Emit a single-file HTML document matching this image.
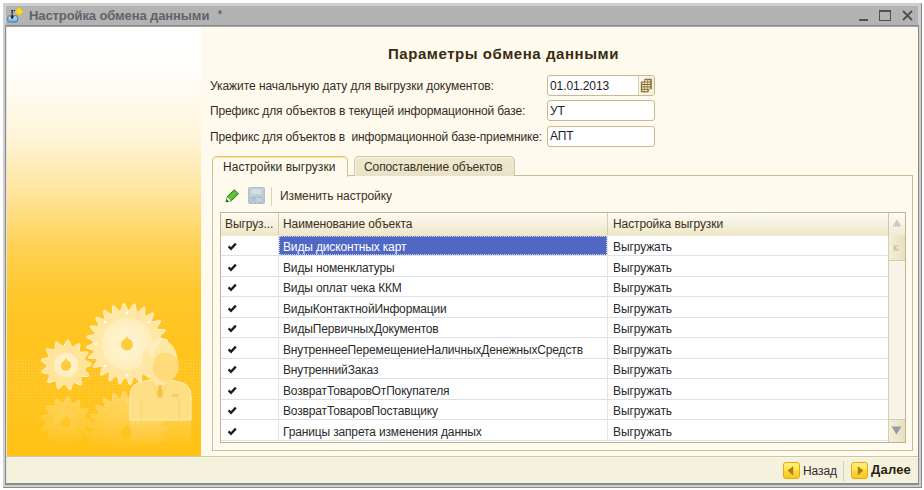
<!DOCTYPE html>
<html><head><meta charset="utf-8">
<style>
*{box-sizing:border-box}
html,body{margin:0;padding:0}
body{width:924px;height:490px;background:#fff;position:relative;overflow:hidden;font-family:"Liberation Sans",sans-serif;font-size:12px;color:#000}
.a{position:absolute}
.t{position:absolute;white-space:pre;line-height:14px;letter-spacing:-0.1px}
</style></head><body>
<!-- window frame -->
<div class="a" style="left:3px;top:3px;width:919px;height:485px;background:#cfcfcf;border-right:1px solid #8a8a8a;border-bottom:1px solid #8a8a8a"></div>
<div class="a" style="left:6px;top:6px;width:912px;height:20px;background:#b3b3b3"></div>
<div class="a" style="left:5px;top:25px;width:914px;height:460px;border:1px solid #8c8c8c;border-top:1px solid #8a8a8a;border-right-width:2px;border-bottom-width:2px;border-right-color:#8a8a8a;box-shadow:inset 1px 1px 0 #e2e2e2"></div>
<div class="a" style="left:6px;top:26px;width:912px;height:1px;background:#a6a6a6"></div>

<!-- title -->
<svg class="a" style="left:7px;top:6px" width="18" height="18" viewBox="0 0 18 18">
  <defs><linearGradient id="tb" x1="0" y1="0" x2="0" y2="1"><stop offset="0" stop-color="#c8e8fa"/><stop offset="1" stop-color="#6aaee0"/></linearGradient></defs>
  <rect x="0.8" y="9.8" width="9.8" height="6.2" rx="1.8" fill="url(#tb)" stroke="#3f76a8" stroke-width="1"/>
  <path d="M5.2 4 V11" stroke="#111" stroke-width="1.6" stroke-dasharray="1.4 0.8"/>
  <path d="M4.6 4.6 H9.2" stroke="#222" stroke-width="1.3" stroke-dasharray="1.3 0.8"/>
  <path d="M3.3 10.2 L7.1 10.2 L5.2 13.2 Z" fill="#111"/>
  <path d="M12.2 1 L16.7 5.5 L12.2 10 L7.7 5.5 Z" fill="#f8d820" stroke="#e0b020" stroke-width="0.7"/>
</svg>
<div class="t" style="left:29px;top:8px;font-weight:bold;font-size:13px;color:#62626c;line-height:16px">Настройка обмена данными</div>
<div class="t" style="left:218px;top:9px;font-weight:bold;font-size:10px;color:#62626c;line-height:12px">*</div>
<div class="a" style="left:859px;top:19px;width:9px;height:2px;background:#505050"></div>
<div class="a" style="left:879px;top:10px;width:12px;height:11px;border:2px solid #505050;border-width:2px 1.5px 1.5px 1.5px"></div>
<svg class="a" style="left:902px;top:10px" width="11" height="11" viewBox="0 0 11 11"><path d="M1 1 L10 10 M10 1 L1 10" stroke="#505050" stroke-width="1.8"/></svg>

<!-- content area -->
<div class="a" style="left:7px;top:27px;width:911px;height:430px;background:#fefaee"></div>
<!-- left image -->
<div class="a" style="left:7px;top:27px;width:194px;height:429px;background:linear-gradient(180deg,#ffffff 0px,#fffefb 45px,#fff5da 107px,#ffe59e 164px,#ffd152 222px,#ffc72c 267px,#ffc31c 330px,#ffc216 429px);overflow:hidden">
<svg class="a" style="left:0;top:0" width="194" height="429" viewBox="0 0 194 429">
<defs><pattern id="dots" width="3" height="3" patternUnits="userSpaceOnUse"><rect width="1.5" height="1.5" fill="#fff" fill-opacity="0.2"/></pattern><linearGradient id="fade" x1="0" y1="0" x2="0" y2="1"><stop offset="0" stop-color="#fff" stop-opacity="1"/><stop offset="0.5" stop-color="#fff" stop-opacity="0.7"/><stop offset="1" stop-color="#fff" stop-opacity="0"/></linearGradient><mask id="fm"><rect x="0" y="331" width="194" height="85" fill="url(#fade)"/></mask><linearGradient id="rf" x1="0" y1="0" x2="0" y2="1"><stop offset="0" stop-color="#fff" stop-opacity="0.9"/><stop offset="1" stop-color="#fff" stop-opacity="0"/></linearGradient><mask id="rm"><rect x="0" y="362" width="194" height="62" fill="url(#rf)"/></mask><radialGradient id="dg"><stop offset="0" stop-color="#fff4d4"/><stop offset="0.85" stop-color="#ffefc2"/><stop offset="1" stop-color="#ffecb8"/></radialGradient></defs>
<rect x="0" y="331" width="194" height="85" fill="url(#dots)" mask="url(#fm)"/>
<g mask="url(#rm)" opacity="0.6"><path d="M78.1,398.9 L77.9,400.0 L82.0,404.8 L81.2,406.6 L74.8,406.4 L74.1,407.3 L73.4,408.2 L74.8,414.4 L73.3,415.5 L67.7,412.5 L66.7,412.9 L65.6,413.3 L64.0,419.5 L62.1,419.8 L58.6,414.5 L57.5,414.4 L56.3,414.3 L52.0,419.0 L50.2,418.4 L49.6,412.1 L48.6,411.5 L47.7,410.9 L41.7,413.0 L40.3,411.6 L42.7,405.7 L42.1,404.8 L41.6,403.8 L35.3,402.9 L34.7,401.1 L39.6,396.9 L39.5,395.8 L39.5,394.7 L34.3,391.0 L34.7,389.1 L40.9,387.7 L41.4,386.7 L41.9,385.7 L39.0,380.0 L40.2,378.5 L46.4,380.1 L47.3,379.4 L48.2,378.8 L48.3,372.4 L50.1,371.7 L54.7,376.0 L55.8,375.8 L57.0,375.6 L60.0,370.0 L61.9,370.2 L64.1,376.2 L65.1,376.5 L66.2,376.9 L71.5,373.4 L73.1,374.4 L72.2,380.7 L73.0,381.5 L73.8,382.3 L80.1,381.6 L81.1,383.3 L77.4,388.5 L77.7,389.5 L78.0,390.6 L83.9,393.0 L84.0,394.9 L78.3,397.8Z" fill="#ffe49a" stroke="#fff0c4" stroke-width="1"/><circle cx="59" cy="395" r="12" fill="url(#dg)"/><circle cx="59" cy="395.5" r="5" fill="#ffcd3c"/><path d="M57.4 391.2 L59 388 L60.6 391.2Z" fill="#ffcd3c"/><path d="M154.0,406.7 L153.9,407.8 L160.1,411.5 L159.8,413.1 L152.7,414.4 L152.4,415.4 L152.0,416.4 L157.0,421.6 L156.3,423.2 L149.1,422.5 L148.6,423.5 L148.0,424.3 L151.5,430.6 L150.4,431.9 L143.6,429.5 L142.8,430.2 L142.0,430.9 L143.8,437.9 L142.4,438.9 L136.4,434.8 L135.5,435.3 L134.5,435.7 L134.4,442.9 L132.8,443.5 L128.2,438.0 L127.1,438.2 L126.1,438.4 L124.1,445.4 L122.4,445.5 L119.4,439.0 L118.3,439.0 L117.2,438.9 L113.5,445.1 L111.9,444.8 L110.6,437.7 L109.6,437.4 L108.6,437.0 L103.4,442.0 L101.8,441.3 L102.5,434.1 L101.5,433.6 L100.7,433.0 L94.4,436.5 L93.1,435.4 L95.5,428.6 L94.8,427.8 L94.1,427.0 L87.1,428.8 L86.1,427.4 L90.2,421.4 L89.7,420.5 L89.3,419.5 L82.1,419.4 L81.5,417.8 L87.0,413.2 L86.8,412.1 L86.6,411.1 L79.6,409.1 L79.5,407.4 L86.0,404.4 L86.0,403.3 L86.1,402.2 L79.9,398.5 L80.2,396.9 L87.3,395.6 L87.6,394.6 L88.0,393.6 L83.0,388.4 L83.7,386.8 L90.9,387.5 L91.4,386.5 L92.0,385.7 L88.5,379.4 L89.6,378.1 L96.4,380.5 L97.2,379.8 L98.0,379.1 L96.2,372.1 L97.6,371.1 L103.6,375.2 L104.5,374.7 L105.5,374.3 L105.6,367.1 L107.2,366.5 L111.8,372.0 L112.9,371.8 L113.9,371.6 L115.9,364.6 L117.6,364.5 L120.6,371.0 L121.7,371.0 L122.8,371.1 L126.5,364.9 L128.1,365.2 L129.4,372.3 L130.4,372.6 L131.4,373.0 L136.6,368.0 L138.2,368.7 L137.5,375.9 L138.5,376.4 L139.3,377.0 L145.6,373.5 L146.9,374.6 L144.5,381.4 L145.2,382.2 L145.9,383.0 L152.9,381.2 L153.9,382.6 L149.8,388.6 L150.3,389.5 L150.7,390.5 L157.9,390.6 L158.5,392.2 L153.0,396.8 L153.2,397.9 L153.4,398.9 L160.4,400.9 L160.5,402.6 L154.0,405.6Z" fill="#ffe8a6" stroke="#fff0c4" stroke-width="1"/><circle cx="120" cy="405" r="26" fill="url(#dg)"/><circle cx="151.0" cy="405.0" r="1.4" fill="#fffbee"/><circle cx="141.9" cy="426.9" r="1.4" fill="#fffbee"/><circle cx="120.0" cy="436.0" r="1.4" fill="#fffbee"/><circle cx="98.1" cy="426.9" r="1.4" fill="#fffbee"/><circle cx="89.0" cy="405.0" r="1.4" fill="#fffbee"/><circle cx="98.1" cy="383.1" r="1.4" fill="#fffbee"/><circle cx="120.0" cy="374.0" r="1.4" fill="#fffbee"/><circle cx="141.9" cy="383.1" r="1.4" fill="#fffbee"/><circle cx="120" cy="405.5" r="6" fill="#ffcd3c"/><path d="M118.4 400.2 L120 397 L121.6 400.2Z" fill="#ffcd3c"/></g>
<path d="M154.0,318.7 L153.9,319.8 L160.1,323.5 L159.8,325.1 L152.7,326.4 L152.4,327.4 L152.0,328.4 L157.0,333.6 L156.3,335.2 L149.1,334.5 L148.6,335.5 L148.0,336.3 L151.5,342.6 L150.4,343.9 L143.6,341.5 L142.8,342.2 L142.0,342.9 L143.8,349.9 L142.4,350.9 L136.4,346.8 L135.5,347.3 L134.5,347.7 L134.4,354.9 L132.8,355.5 L128.2,350.0 L127.1,350.2 L126.1,350.4 L124.1,357.4 L122.4,357.5 L119.4,351.0 L118.3,351.0 L117.2,350.9 L113.5,357.1 L111.9,356.8 L110.6,349.7 L109.6,349.4 L108.6,349.0 L103.4,354.0 L101.8,353.3 L102.5,346.1 L101.5,345.6 L100.7,345.0 L94.4,348.5 L93.1,347.4 L95.5,340.6 L94.8,339.8 L94.1,339.0 L87.1,340.8 L86.1,339.4 L90.2,333.4 L89.7,332.5 L89.3,331.5 L82.1,331.4 L81.5,329.8 L87.0,325.2 L86.8,324.1 L86.6,323.1 L79.6,321.1 L79.5,319.4 L86.0,316.4 L86.0,315.3 L86.1,314.2 L79.9,310.5 L80.2,308.9 L87.3,307.6 L87.6,306.6 L88.0,305.6 L83.0,300.4 L83.7,298.8 L90.9,299.5 L91.4,298.5 L92.0,297.7 L88.5,291.4 L89.6,290.1 L96.4,292.5 L97.2,291.8 L98.0,291.1 L96.2,284.1 L97.6,283.1 L103.6,287.2 L104.5,286.7 L105.5,286.3 L105.6,279.1 L107.2,278.5 L111.8,284.0 L112.9,283.8 L113.9,283.6 L115.9,276.6 L117.6,276.5 L120.6,283.0 L121.7,283.0 L122.8,283.1 L126.5,276.9 L128.1,277.2 L129.4,284.3 L130.4,284.6 L131.4,285.0 L136.6,280.0 L138.2,280.7 L137.5,287.9 L138.5,288.4 L139.3,289.0 L145.6,285.5 L146.9,286.6 L144.5,293.4 L145.2,294.2 L145.9,295.0 L152.9,293.2 L153.9,294.6 L149.8,300.6 L150.3,301.5 L150.7,302.5 L157.9,302.6 L158.5,304.2 L153.0,308.8 L153.2,309.9 L153.4,310.9 L160.4,312.9 L160.5,314.6 L154.0,317.6Z" fill="#ffe8a6" stroke="#fff0c4" stroke-width="1"/>
<circle cx="120" cy="317" r="26" fill="url(#dg)"/>
<circle cx="151.0" cy="317.0" r="1.4" fill="#fffbee"/>
<circle cx="141.9" cy="338.9" r="1.4" fill="#fffbee"/>
<circle cx="120.0" cy="348.0" r="1.4" fill="#fffbee"/>
<circle cx="98.1" cy="338.9" r="1.4" fill="#fffbee"/>
<circle cx="89.0" cy="317.0" r="1.4" fill="#fffbee"/>
<circle cx="98.1" cy="295.1" r="1.4" fill="#fffbee"/>
<circle cx="120.0" cy="286.0" r="1.4" fill="#fffbee"/>
<circle cx="141.9" cy="295.1" r="1.4" fill="#fffbee"/>
<circle cx="120" cy="317.5" r="6" fill="#ffcd3c"/>
<path d="M118.4 312.2 L120 309 L121.6 312.2Z" fill="#ffcd3c"/>
<path d="M78.1,341.9 L77.9,343.0 L82.0,347.8 L81.2,349.6 L74.8,349.4 L74.1,350.3 L73.4,351.2 L74.8,357.4 L73.3,358.5 L67.7,355.5 L66.7,355.9 L65.6,356.3 L64.0,362.5 L62.1,362.8 L58.6,357.5 L57.5,357.4 L56.3,357.3 L52.0,362.0 L50.2,361.4 L49.6,355.1 L48.6,354.5 L47.7,353.9 L41.7,356.0 L40.3,354.6 L42.7,348.7 L42.1,347.8 L41.6,346.8 L35.3,345.9 L34.7,344.1 L39.6,339.9 L39.5,338.8 L39.5,337.7 L34.3,334.0 L34.7,332.1 L40.9,330.7 L41.4,329.7 L41.9,328.7 L39.0,323.0 L40.2,321.5 L46.4,323.1 L47.3,322.4 L48.2,321.8 L48.3,315.4 L50.1,314.7 L54.7,319.0 L55.8,318.8 L57.0,318.6 L60.0,313.0 L61.9,313.2 L64.1,319.2 L65.1,319.5 L66.2,319.9 L71.5,316.4 L73.1,317.4 L72.2,323.7 L73.0,324.5 L73.8,325.3 L80.1,324.6 L81.1,326.3 L77.4,331.5 L77.7,332.5 L78.0,333.6 L83.9,336.0 L84.0,337.9 L78.3,340.8Z" fill="#ffe49a" stroke="#fff0c4" stroke-width="1"/>
<circle cx="59" cy="338" r="12.5" fill="url(#dg)"/>
<circle cx="59" cy="338.5" r="5.2" fill="#ffcd3c"/>
<path d="M57.4 334.0 L59 330.8 L60.6 334.0Z" fill="#ffcd3c"/>
<g>
<path d="M123 393 L123 369 Q123 357 135 355 L146 352 L153 360 L160 352 L172 355 Q184 357 184 369 L184 393 Z" fill="#ffdf86" stroke="#fff0c0" stroke-width="1"/>
<path d="M146 352 L153 366 L160 352 Z" fill="#ffe7a6"/>
<path d="M143 353 L151 372 L153 366 Z M163 353 L155 372 L153 366 Z" fill="#ffd978"/>
<path d="M151.3 358 L154.7 358 L155.8 368 L153 372 L150.2 368 Z" fill="#f6c44a"/>
<path d="M134 393 L134 372 M172 393 L172 372" stroke="#f8d070" stroke-width="1"/>
<rect x="165" y="367" width="7" height="3" fill="#f6cf66"/>
<g mask="url(#rm)"><path d="M123 393 L184 393 L184 416 L123 416Z" fill="#ffe08c" fill-opacity="0.8"/></g>
<ellipse cx="153" cy="333.5" rx="17.5" ry="21" fill="#ffe7a4"/>
<path d="M140 322 Q146 311 156 312 Q150 318 146 330 Z" fill="#fff0c4" fill-opacity="0.8"/>
<ellipse cx="158.5" cy="340" rx="13" ry="14.5" fill="#ffdb7c"/>
</g>
</svg>
</div>

<!-- footer -->
<div class="a" style="left:7px;top:456px;width:911px;height:27px;background:#f4f1dd;border-top:1px solid #cdc5a4;box-shadow:inset 0 1px 0 #fbf8ea"></div>

<!-- heading -->
<div class="t" style="left:388px;top:46px;font-weight:bold;font-size:15px;letter-spacing:0.55px;color:#3a2a10;line-height:16px">Параметры обмена данными</div>

<!-- labels -->
<div class="t" style="left:210px;top:79px;color:#362c1e;letter-spacing:-0.06px">Укажите начальную дату для выгрузки документов:</div>
<div class="t" style="left:210px;top:104px;color:#362c1e;letter-spacing:-0.12px">Префикс для объектов в текущей информационной базе:</div>
<div class="t" style="left:210px;top:130px;color:#362c1e;letter-spacing:-0.13px">Префикс для объектов в  информационной базе-приемнике:</div>

<!-- fields -->
<div class="a" style="left:547px;top:75px;width:108px;height:21px;background:#fff;border:1px solid #c8b98e;border-radius:3px"></div>
<div class="a" style="left:638px;top:76px;width:16px;height:19px;background:linear-gradient(90deg,#fbf8ee,#f3eedc);border-left:1px solid #d9cfae;border-radius:0 2px 2px 0"></div>
<svg class="a" style="left:640px;top:78px" width="14" height="15" viewBox="0 0 14 15"><path d="M4.8 1.2 H11.3 V10.9 H8.3 V13.9 H1.3 V3.9 H4.8 Z" fill="#7a6428" stroke="#7a6428" stroke-width="0.8" stroke-linejoin="round"/><rect x="5.0" y="2.2" width="2.5" height="1.4" fill="#f3ead0"/><rect x="7.9" y="2.2" width="2.5" height="1.4" fill="#f3ead0"/><rect x="2.1" y="4.6" width="2.5" height="1.4" fill="#f3ead0"/><rect x="5.0" y="4.6" width="2.5" height="1.4" fill="#f3ead0"/><rect x="7.9" y="4.6" width="2.5" height="1.4" fill="#f3ead0"/><rect x="2.1" y="7.0" width="2.5" height="1.4" fill="#f3ead0"/><rect x="5.0" y="7.0" width="2.5" height="1.4" fill="#f3ead0"/><rect x="7.9" y="7.0" width="2.5" height="1.4" fill="#f3ead0"/><rect x="2.1" y="9.4" width="2.5" height="1.4" fill="#f3ead0"/><rect x="5.0" y="9.4" width="2.5" height="1.4" fill="#f3ead0"/><rect x="7.9" y="9.4" width="2.5" height="1.4" fill="#f3ead0"/><rect x="2.1" y="11.8" width="2.5" height="1.4" fill="#f3ead0"/><rect x="5.0" y="11.8" width="2.5" height="1.4" fill="#f3ead0"/></svg>
<div class="t" style="left:550px;top:79px;color:#1c1c2c">01.01.2013</div>
<div class="a" style="left:547px;top:100px;width:108px;height:21px;background:#fff;border:1px solid #c8b98e;border-radius:3px"></div>
<div class="t" style="left:550px;top:104px;color:#1c1c2c">УТ</div>
<div class="a" style="left:547px;top:126px;width:108px;height:21px;background:#fff;border:1px solid #c8b98e;border-radius:3px"></div>
<div class="t" style="left:550px;top:129px;color:#1c1c2c">АПТ</div>

<!-- tabs -->
<div class="a" style="left:212px;top:175px;width:701px;height:276px;border:1px solid #cbc29c;border-top-color:#c6bd96;border-right-color:#c6bd96;background:#fefaee;box-shadow:inset 1px 1px 0 #fffdf6"></div>
<div class="a" style="left:354px;top:156px;width:161px;height:20px;background:linear-gradient(#efe9d2,#e9e2c6);border:1px solid #d0c6a0;border-bottom:none;border-radius:5px 5px 0 0;box-shadow:inset 1px 1px 0 #f8f4e6"></div>
<div class="t" style="left:364px;top:160px;color:#3c3020">Сопоставление объектов</div>
<div class="a" style="left:212px;top:156px;width:136px;height:21px;background:#fefaee;border:1px solid #cbc29c;border-top:1px solid #eec060;border-bottom:none;border-radius:5px 5px 0 0;box-shadow:inset 0 1px 0 #f8e4b0"></div>
<div class="t" style="left:223px;top:160px;color:#2e2a20;letter-spacing:0.05px">Настройки выгрузки</div>

<!-- toolbar -->
<svg class="a" style="left:225px;top:189px" width="15" height="15" viewBox="0 0 15 15">
  <defs><linearGradient id="pg" x1="0" y1="0" x2="1" y2="1"><stop offset="0" stop-color="#249010"/><stop offset="0.5" stop-color="#62cc38"/><stop offset="1" stop-color="#1c7a0c"/></linearGradient></defs>
  <path d="M9.35 0.75 L13.45 4.85 L6.55 11.55 L1 13 L2.45 7.45 Z" fill="url(#pg)" stroke="#1f6e10" stroke-width="0.9" stroke-linejoin="round"/>
  <path d="M2.3 8.2 L5.8 11.7 L1.2 12.8 Z" fill="#f4f4f0"/>
  <path d="M1 13 L1.8 10.3 L3.7 12.2 Z" fill="#1a4a10"/>
</svg>
<svg class="a" style="left:248px;top:187px" width="17" height="17" viewBox="0 0 17 17">
  <rect x="0.5" y="0.5" width="16" height="16" rx="1" fill="#bccbd8" stroke="#b0c0cf"/>
  <rect x="3" y="2" width="10.5" height="5.5" fill="#d3dee7" stroke="#c3d0db" stroke-width="0.8"/>
  <rect x="2.5" y="10" width="12" height="6" fill="#a9b8c6"/>
  <path d="M4 11 V15 H6.5 M8 11.5 H10.5 V15 H8 Z M12 11 V15 M12 13 L14 11 M12 13 L14 15" stroke="#d8e2ea" stroke-width="0.9" fill="none"/>
</svg>
<div class="a" style="left:271px;top:187px;width:1px;height:19px;background:#ddd3b5"></div>
<div class="t" style="left:280px;top:189px;color:#3c3020">Изменить настройку</div>

<!-- table -->
<div class="a" style="left:220px;top:212px;width:686px;height:231px;background:#fff;border:1px solid #bfb48e"></div>
<div class="a" style="left:221px;top:213px;width:667px;height:23px;background:linear-gradient(#fbfbf3,#f5f1de 50%,#eee6c6);box-shadow:inset 0 1px 0 #fff"></div>
<div class="a" style="left:278px;top:213px;width:1px;height:23px;background:#d8cfae"></div>
<div class="a" style="left:607px;top:213px;width:1px;height:23px;background:#d8cfae"></div>
<div class="t" style="left:225px;top:217px;color:#3c3020">Выгруз...</div>
<div class="t" style="left:283px;top:217px;color:#3c3020">Наименование объекта</div>
<div class="t" style="left:613px;top:217px;color:#3c3020">Настройка выгрузки</div>

<!--ROWS-->
<div class="a" style="left:221px;top:255px;width:667px;height:1px;background:#d9e1ea"></div>
<div class="a" style="left:279px;top:236px;width:328px;height:19px;background:#5068c4;outline:1px dotted #c8d0f0;outline-offset:-1px"></div>
<svg class="a" style="left:227px;top:242px" width="10" height="9" viewBox="0 0 10 9"><path d="M1.6 4.4 L4 6.8 L8.8 1.6" fill="none" stroke="#1c1c1c" stroke-width="2.3"/></svg>
<div class="t" style="left:283px;top:240px;color:#fff;letter-spacing:-0.15px">Виды дисконтных карт</div>
<div class="t" style="left:613px;top:240px;color:#2a2a2a">Выгружать</div>
<div class="a" style="left:221px;top:276px;width:667px;height:1px;background:#d9e1ea"></div>
<svg class="a" style="left:227px;top:263px" width="10" height="9" viewBox="0 0 10 9"><path d="M1.6 4.4 L4 6.8 L8.8 1.6" fill="none" stroke="#1c1c1c" stroke-width="2.3"/></svg>
<div class="t" style="left:283px;top:261px;color:#2a2a2a;letter-spacing:-0.15px">Виды номенклатуры</div>
<div class="t" style="left:613px;top:261px;color:#2a2a2a">Выгружать</div>
<div class="a" style="left:221px;top:296px;width:667px;height:1px;background:#d9e1ea"></div>
<svg class="a" style="left:227px;top:283px" width="10" height="9" viewBox="0 0 10 9"><path d="M1.6 4.4 L4 6.8 L8.8 1.6" fill="none" stroke="#1c1c1c" stroke-width="2.3"/></svg>
<div class="t" style="left:283px;top:281px;color:#2a2a2a;letter-spacing:-0.15px">Виды оплат чека ККМ</div>
<div class="t" style="left:613px;top:281px;color:#2a2a2a">Выгружать</div>
<div class="a" style="left:221px;top:317px;width:667px;height:1px;background:#d9e1ea"></div>
<svg class="a" style="left:227px;top:304px" width="10" height="9" viewBox="0 0 10 9"><path d="M1.6 4.4 L4 6.8 L8.8 1.6" fill="none" stroke="#1c1c1c" stroke-width="2.3"/></svg>
<div class="t" style="left:283px;top:302px;color:#2a2a2a;letter-spacing:-0.15px">ВидыКонтактнойИнформации</div>
<div class="t" style="left:613px;top:302px;color:#2a2a2a">Выгружать</div>
<div class="a" style="left:221px;top:337px;width:667px;height:1px;background:#d9e1ea"></div>
<svg class="a" style="left:227px;top:324px" width="10" height="9" viewBox="0 0 10 9"><path d="M1.6 4.4 L4 6.8 L8.8 1.6" fill="none" stroke="#1c1c1c" stroke-width="2.3"/></svg>
<div class="t" style="left:283px;top:322px;color:#2a2a2a;letter-spacing:-0.15px">ВидыПервичныхДокументов</div>
<div class="t" style="left:613px;top:322px;color:#2a2a2a">Выгружать</div>
<div class="a" style="left:221px;top:358px;width:667px;height:1px;background:#d9e1ea"></div>
<svg class="a" style="left:227px;top:345px" width="10" height="9" viewBox="0 0 10 9"><path d="M1.6 4.4 L4 6.8 L8.8 1.6" fill="none" stroke="#1c1c1c" stroke-width="2.3"/></svg>
<div class="t" style="left:283px;top:343px;color:#2a2a2a;letter-spacing:-0.15px">ВнутреннееПеремещениеНаличныхДенежныхСредств</div>
<div class="t" style="left:613px;top:343px;color:#2a2a2a">Выгружать</div>
<div class="a" style="left:221px;top:378px;width:667px;height:1px;background:#d9e1ea"></div>
<svg class="a" style="left:227px;top:365px" width="10" height="9" viewBox="0 0 10 9"><path d="M1.6 4.4 L4 6.8 L8.8 1.6" fill="none" stroke="#1c1c1c" stroke-width="2.3"/></svg>
<div class="t" style="left:283px;top:363px;color:#2a2a2a;letter-spacing:-0.15px">ВнутреннийЗаказ</div>
<div class="t" style="left:613px;top:363px;color:#2a2a2a">Выгружать</div>
<div class="a" style="left:221px;top:399px;width:667px;height:1px;background:#d9e1ea"></div>
<svg class="a" style="left:227px;top:386px" width="10" height="9" viewBox="0 0 10 9"><path d="M1.6 4.4 L4 6.8 L8.8 1.6" fill="none" stroke="#1c1c1c" stroke-width="2.3"/></svg>
<div class="t" style="left:283px;top:384px;color:#2a2a2a;letter-spacing:-0.15px">ВозвратТоваровОтПокупателя</div>
<div class="t" style="left:613px;top:384px;color:#2a2a2a">Выгружать</div>
<div class="a" style="left:221px;top:419px;width:667px;height:1px;background:#d9e1ea"></div>
<svg class="a" style="left:227px;top:406px" width="10" height="9" viewBox="0 0 10 9"><path d="M1.6 4.4 L4 6.8 L8.8 1.6" fill="none" stroke="#1c1c1c" stroke-width="2.3"/></svg>
<div class="t" style="left:283px;top:404px;color:#2a2a2a;letter-spacing:-0.15px">ВозвратТоваровПоставщику</div>
<div class="t" style="left:613px;top:404px;color:#2a2a2a">Выгружать</div>
<div class="a" style="left:221px;top:440px;width:667px;height:1px;background:#d9e1ea"></div>
<svg class="a" style="left:227px;top:427px" width="10" height="9" viewBox="0 0 10 9"><path d="M1.6 4.4 L4 6.8 L8.8 1.6" fill="none" stroke="#1c1c1c" stroke-width="2.3"/></svg>
<div class="t" style="left:283px;top:425px;color:#2a2a2a;letter-spacing:-0.15px">Границы запрета изменения данных</div>
<div class="t" style="left:613px;top:425px;color:#2a2a2a">Выгружать</div>
<div class="a" style="left:278px;top:235px;width:1px;height:207px;background:#dfe5ec"></div>
<div class="a" style="left:607px;top:235px;width:1px;height:207px;background:#dfe5ec"></div>
<!--/ROWS-->

<!-- scrollbar -->
<div class="a" style="left:888px;top:213px;width:17px;height:229px;background:#f7f4ea;border-left:1px solid #d8cfb0"></div>
<div class="a" style="left:888px;top:213px;width:17px;height:23px;background:linear-gradient(#fcfbf5,#f0ebd6);border-left:1px solid #cfc6a4;border-bottom:1px solid #d8cfb0"></div>
<svg class="a" style="left:892px;top:219px" width="10" height="8" viewBox="0 0 10 8"><path d="M5 0.5 L9.5 7.5 L0.5 7.5 Z" fill="#cfcabb"/></svg>
<div class="a" style="left:888px;top:235px;width:17px;height:26px;background:linear-gradient(90deg,#f3eed8,#e8e0c0);border-left:1px solid #d8cfb0;border-bottom:1px solid #d8cfb0"></div>
<div class="a" style="left:893px;top:245px;width:6px;height:6px;border-radius:50%;background:#d2c9a8"></div><div class="a" style="left:896px;top:246px;width:3px;height:3px;border-radius:50%;background:#ede6ca"></div>
<div class="a" style="left:888px;top:419px;width:17px;height:23px;background:linear-gradient(90deg,#f3eed8,#e8e0c0);border-left:1px solid #d8cfb0;border-top:1px solid #d8cfb0"></div>
<svg class="a" style="left:891px;top:426px" width="11" height="9" viewBox="0 0 11 9"><path d="M0.5 0.5 L10.5 0.5 L5.5 8.5 Z" fill="#9a9aa4"/></svg>

<!-- footer buttons -->
<svg class="a" style="left:783px;top:462px" width="18" height="18" viewBox="0 0 18 18">
  <defs><linearGradient id="yb" x1="0" y1="0" x2="0" y2="1"><stop offset="0" stop-color="#fff080"/><stop offset="0.45" stop-color="#ffe84a"/><stop offset="0.55" stop-color="#fcd830"/><stop offset="1" stop-color="#f8c824"/></linearGradient></defs>
  <rect x="0.5" y="0.5" width="16" height="16" rx="2.5" fill="url(#yb)" stroke="#e6a818"/>
  <path d="M4.6 8.6 L10.2 4.2 L10.2 13.4 Z" fill="#b07a20"/>
</svg>
<div class="t" style="left:803px;top:464px;color:#302a30">Назад</div>
<div class="a" style="left:843px;top:461px;width:1px;height:20px;background:#d9d1b6"></div>
<svg class="a" style="left:851px;top:462px" width="18" height="18" viewBox="0 0 18 18">
  <rect x="0.5" y="0.5" width="16" height="16" rx="2.5" fill="url(#yb)" stroke="#e6a818"/>
  <path d="M12.4 8.6 L6.8 4.2 L6.8 13.4 Z" fill="#b07a20"/>
</svg>
<div class="t" style="left:871px;top:463px;font-weight:bold;font-size:13px;color:#2a2010;letter-spacing:0.2px">Далее</div>
</body></html>
